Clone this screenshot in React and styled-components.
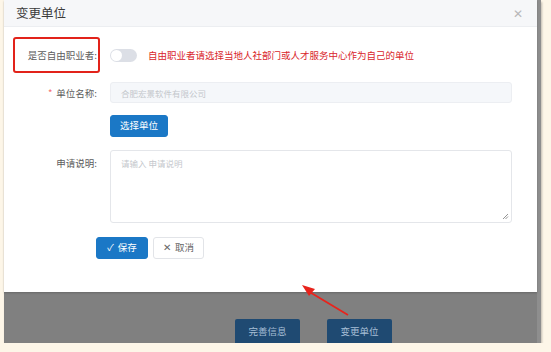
import React from 'react';
import styled, { createGlobalStyle } from 'styled-components';

const GlobalStyle = createGlobalStyle`
  html, body {
    margin: 0;
    padding: 0;
    background: #fdf6e8;
    font-family: "Noto Sans CJK SC", "Noto Sans", sans-serif;
  }
`;

const Frame = styled.div`
  position: relative;
  width: 533px;
  height: 343px;
  margin-left: 4px;
  display: flex;
  flex-direction: column;
  border-right: 4px solid #8e8e8e;
  box-shadow: 1px 2px 2px rgba(0, 0, 0, 0.25);
`;

const Dialog = styled.div`
  height: 292px;
  box-sizing: border-box;
  background: #fff;
  display: flex;
  flex-direction: column;
  box-shadow: 0 1px 2px rgba(0, 0, 0, 0.2);
  z-index: 1;
`;

const Header = styled.div`
  height: 27px;
  box-sizing: border-box;
  display: flex;
  align-items: center;
  justify-content: space-between;
  padding: 0 14px 1px 12px;
  background: #f6f7f9;
  border-bottom: 1px solid #eceef1;
`;

const Title = styled.div`
  font-size: 12.5px;
  color: #3a3a3a;
`;

const Close = styled.span`
  font-size: 12px;
  color: #b8b8b8;
`;

const Body = styled.div`
  padding: 10px 25px 0 0;
  display: flex;
  flex-direction: column;
`;

const Row = styled.div`
  display: grid;
  grid-template-columns: 96px 1fr;
  column-gap: 10px;
  align-items: ${(p) => (p.$top ? 'start' : 'center')};
  margin-top: ${(p) => p.$mt || 0}px;
`;

const Label = styled.div`
  justify-self: end;
  text-align: right;
  font-size: 9.5px;
  color: #5c5c5c;
  padding-right: 3px;
  padding-top: ${(p) => (p.$top ? '6px' : '0')};
  white-space: nowrap;
`;

const MarkedLabel = styled(Label)`
  box-sizing: border-box;
  width: 87px;
  height: 36px;
  display: flex;
  align-items: center;
  justify-content: flex-end;
  padding-right: 1px;
  border: 2px solid #e2231a;
  border-radius: 3px;
`;

const Star = styled.span`
  color: #f56c6c;
  margin-right: 4px;
`;

const Inline = styled.div`
  display: flex;
  align-items: center;
  gap: 11px;
`;

const Cell = styled.div`
  display: flex;
  align-items: center;
`;

const Switch = styled.span`
  position: relative;
  width: 27px;
  height: 13px;
  border-radius: 7px;
  background: #dcdfe6;

  &::after {
    content: '';
    position: absolute;
    left: 1px;
    top: 1px;
    width: 11px;
    height: 11px;
    border-radius: 50%;
    background: #fff;
  }
`;

const Hint = styled.span`
  font-size: 9.5px;
  color: #d9252b;
  white-space: nowrap;
`;

const Input = styled.div`
  height: 21px;
  box-sizing: border-box;
  display: flex;
  align-items: center;
  padding-left: 10px;
  font-size: 8.5px;
  color: #c4c7cc;
  background: #f5f7fa;
  border: 1px solid #eceef2;
  border-radius: 3px;
`;

const TextArea = styled.div`
  position: relative;
  height: 73px;
  box-sizing: border-box;
  padding: 6px 10px;
  font-size: 8.5px;
  line-height: 12px;
  color: #c4c7cc;
  background: #fff;
  border: 1px solid #e4e6ea;
  border-radius: 3px;
`;

const Grip = styled.svg`
  position: absolute;
  right: 2px;
  bottom: 2px;
`;

const Button = styled.button`
  box-sizing: border-box;
  height: 22px;
  width: ${(p) => p.$w}px;
  display: flex;
  align-items: center;
  justify-content: center;
  gap: 4px;
  padding: 0;
  font-family: inherit;
  font-size: 9.5px;
  line-height: 1;
  border-radius: 3px;
  border: 1px solid ${(p) => (p.$primary ? '#1b78c6' : '#e2e4e8')};
  background: ${(p) => (p.$primary ? '#1b78c6' : '#fff')};
  color: ${(p) => (p.$primary ? '#fff' : '#666')};
`;

const Footer = styled.div`
  display: flex;
  gap: 5px;
  margin-top: 14px;
  padding-left: 92px;
`;

const Overlay = styled.div`
  flex: 1;
  background: #808080;
  display: flex;
  align-items: flex-end;
  gap: 27px;
  padding-left: 231px;
`;

const PageButton = styled.div`
  width: 65px;
  height: 24px;
  display: flex;
  align-items: center;
  justify-content: center;
  font-size: 9.5px;
  color: #a7bfd6;
  background: #1f4a72;
  border-radius: 2px 2px 0 0;
`;

const Arrow = styled.svg`
  position: absolute;
  left: 0;
  top: 0;
  z-index: 2;
  pointer-events: none;
`;

export default function App() {
  return (
    <>
      <GlobalStyle />
      <Frame>
        <Dialog>
          <Header>
            <Title>变更单位</Title>
            <Close>✕</Close>
          </Header>
          <Body>
            <Row>
              <MarkedLabel>是否自由职业者:</MarkedLabel>
              <Inline>
                <Switch />
                <Hint>自由职业者请选择当地人社部门或人才服务中心作为自己的单位</Hint>
              </Inline>
            </Row>
            <Row $mt={9}>
              <Label>
                <Star>*</Star>单位名称:
              </Label>
              <Input>合肥宏景软件有限公司</Input>
            </Row>
            <Row $mt={12}>
              <span />
              <Cell>
                <Button $primary $w={58}>选择单位</Button>
              </Cell>
            </Row>
            <Row $mt={13} $top>
              <Label $top>申请说明:</Label>
              <TextArea>
                请输入 申请说明
                <Grip width="7" height="7" viewBox="0 0 7 7">
                  <path d="M6 1 L1 6 M6 3.5 L3.5 6" stroke="#888" strokeWidth="0.9" />
                </Grip>
              </TextArea>
            </Row>
            <Footer>
              <Button $primary $w={52}>
                <span>✓</span>保存
              </Button>
              <Button $w={51}>
                <span>✕</span>取消
              </Button>
            </Footer>
          </Body>
        </Dialog>
        <Overlay>
          <PageButton>完善信息</PageButton>
          <PageButton>变更单位</PageButton>
        </Overlay>
        <Arrow width="533" height="343" viewBox="0 0 533 343">
          <line x1="344" y1="315" x2="304" y2="291" stroke="#e8231c" strokeWidth="1.8" />
          <polygon points="298,285 311,289 305,296" fill="#e8231c" />
        </Arrow>
      </Frame>
    </>
  );
}
